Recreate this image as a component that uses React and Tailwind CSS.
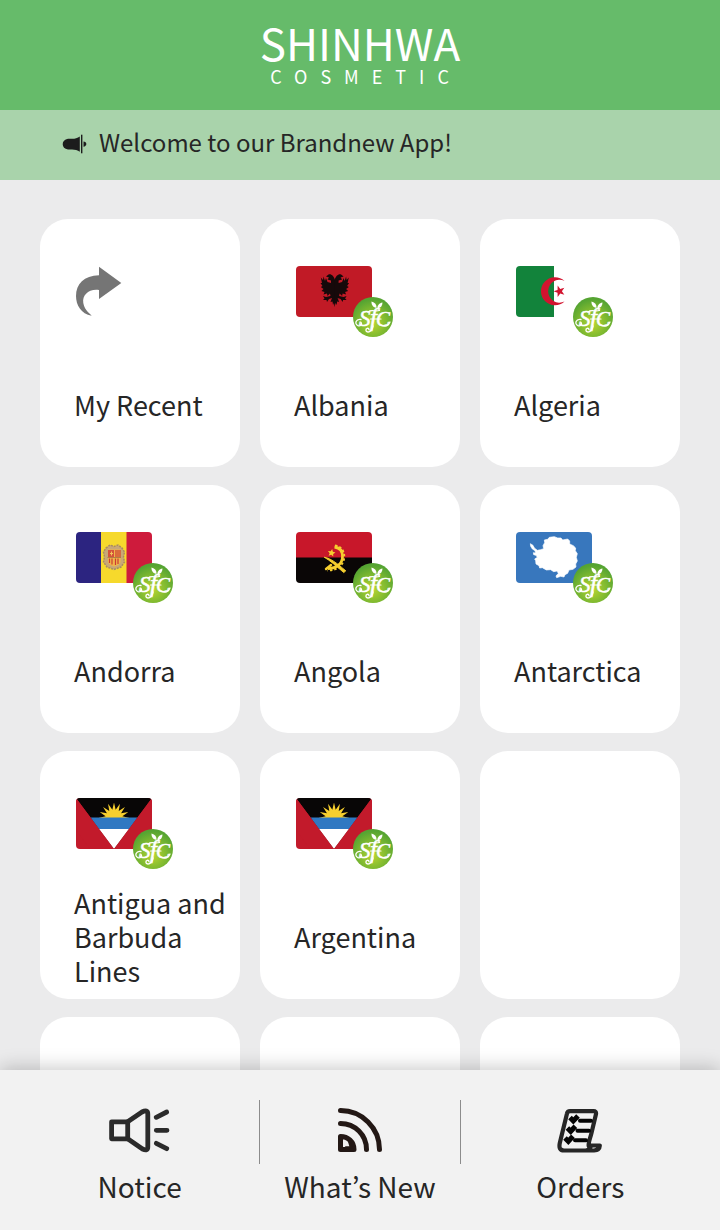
import React from "react";

function starPoints(cx, cy, outer, inner, spikes, turn = -90) {
  const points = [];
  for (let i = 0; i < spikes * 2; i++) {
    const r = i % 2 === 0 ? outer : inner;
    const a = ((turn + (i * 180) / spikes) * Math.PI) / 180;
    points.push(`${(cx + r * Math.cos(a)).toFixed(2)},${(cy + r * Math.sin(a)).toFixed(2)}`);
  }
  return points.join(" ");
}

function Flag({ children }) {
  return (
    <svg viewBox="0 0 76 51" className="h-[51px] w-[76px] rounded-[4px]" aria-hidden="true">
      {children}
    </svg>
  );
}

const EAGLE_HALF =
  "M39 14C38 10 35 7.5 32.5 8.5L30 10.5L33 11.5L31.5 13.5L35 14.5V17L31.5 16L30 12L29 15L27.5 10.5L27 14L24.8 11.5L26 17L24.5 17L26.5 20L24.8 21L27.5 23L25.5 25L28.5 26L27.5 28.5L31 27.5L31.5 30L34 27.5L34.5 30L30 31L27 30L28.5 32.5L27 34L30.5 34L31 36L33 33L36 32L34.5 36L36.5 35.5L37 39L38 37L39 41Z";

function AlbaniaFlag() {
  return (
    <Flag>
      <rect width="76" height="51" fill="#c11a26" />
      <g fill="#16090a">
        <path d={EAGLE_HALF} />
        <path d={EAGLE_HALF} transform="matrix(-1 0 0 1 77.6 0)" />
      </g>
    </Flag>
  );
}

function AlgeriaFlag() {
  return (
    <Flag>
      <rect width="76" height="51" fill="#fff" />
      <rect width="38" height="51" fill="#12833b" />
      <path d="M48.5 15A14 14 0 1 0 48.5 35.5A11.4 11.4 0 1 1 48.5 15Z" fill="#d2142f" />
      <polygon points={starPoints(43.5, 25.3, 6, 2.4, 5, 180)} fill="#d2142f" />
    </Flag>
  );
}

function AndorraFlag() {
  return (
    <Flag>
      <rect width="26" height="51" fill="#2c2480" />
      <rect x="25" width="26" height="51" fill="#f6d92c" />
      <rect x="50.5" width="25.5" height="51" fill="#ce1b3c" />
      <path
        d="M30 16L34 13L38 14.5L42 13L46 16L48.5 20L47.5 25L48.5 30L45 35L38 37.5L31 35L27.5 30L28.5 25L27.5 20Z"
        fill="#c9a875"
        stroke="#a98b62"
        strokeWidth="1.5"
        strokeDasharray="2 1"
      />
      <path d="M32 17.5H44.5V30Q43 33.5 38.2 34.5Q33.5 33.5 32 30Z" fill="#f0b54a" />
      <rect x="32" y="18" width="6" height="7" fill="#d4523b" />
      <path d="M40 18V25M42 18V25M44 18V25M39.5 26.5V33M42 26.5V32M33.5 26.5V31M36 26.5V32.5" stroke="#cc3b33" strokeWidth="1.2" />
      <path d="M34 21.5H37M35.5 19.5V23.5" stroke="#f3c65a" strokeWidth="1" />
      <path d="M31.5 25.5H45" stroke="#8a5a3a" strokeWidth="0.6" />
    </Flag>
  );
}

function AngolaFlag() {
  return (
    <Flag>
      <rect width="76" height="26" fill="#c8172a" />
      <rect y="25.5" width="76" height="25.5" fill="#0a0606" />
      <path d="M38.5 15C44.5 15.8 46.8 20 46.5 25C46.2 31.5 41 36.5 32 36.5" fill="none" stroke="#f6cf2f" strokeWidth="2.8" />
      <path d="M39 13.5C45.5 14.5 48.5 19.5 48.2 25.2C47.9 32.8 41.5 38.4 31.5 38.4" fill="none" stroke="#f6cf2f" strokeWidth="2" strokeDasharray="2.4 2" />
      <path d="M28.2 25.2C35 26.5 40 30.5 49.8 38.8L47.8 40.6C39.5 33.5 34 28.5 28.2 25.2Z" fill="#f6cf2f" stroke="#f6cf2f" strokeWidth="0.9" />
      <path d="M35 33L30 37" stroke="#f6cf2f" strokeWidth="2.4" strokeLinecap="round" />
      <polygon points={starPoints(35.5, 21, 4, 1.9, 5, -80)} fill="#f6cf2f" />
    </Flag>
  );
}

function AntarcticaFlag() {
  return (
    <Flag>
      <rect width="76" height="51" fill="#3877bd" />
      <path
        transform="scale(0.3333) translate(-33 -36)"
        fill="#fff"
        stroke="#fff"
        strokeWidth="2"
        strokeLinejoin="round"
        d="M76 71L84 76L88 84L97 91L107 89L116 86L114 77L119 68L118 60L128 58L133 52L148 50L158 54L168 54L173 60L188 57L194 63L194 72L205 77L212 84L211 92L217 101L214 112L217 123L212 132L213 141L204 148L192 150L188 160L180 164L177 171L167 169L155 173L153 168L160 160L156 153L146 155L137 149L124 150L112 143L104 144L102 137L93 132L92 122L89 117L97 112L93 106L86 104L85 98L92 99L90 92L82 87L77 79Z"
      />
    </Flag>
  );
}

function AntiguaFlag() {
  return (
    <Flag>
      <rect width="76" height="51" fill="#c21a2b" />
      <polygon points="0,0 76,0 38,51" fill="#080606" />
      <polygon points={starPoints(38, 20, 15.5, 8.5, 16)} fill="#f7cf2e" />
      <polygon points="14.5,19.5 61.5,19.5 53,31 23,31" fill="#2f78c2" />
      <polygon points="23,31 53,31 38,51" fill="#fff" />
      <path d="M0 0L38 51L14 51L0 32ZM76 0L38 51L62 51L76 32Z" fill="#c21a2b" />
    </Flag>
  );
}

function PartnerBadge() {
  return (
    <svg viewBox="0 0 40 40" className="absolute top-[31px] left-[57px] size-10" aria-hidden="true">
      <defs>
        <radialGradient id="badge-green" cx="0.5" cy="0.65" r="0.6">
          <stop offset="0" stopColor="#b9d532" />
          <stop offset="0.5" stopColor="#86bd30" />
          <stop offset="1" stopColor="#55a432" />
        </radialGradient>
      </defs>
      <circle cx="20" cy="20" r="20" fill="url(#badge-green)" />
      <g fill="#fff">
        <path d="M23.5 11C19 10 18.5 7 18.5 4.5C22 5.5 23.8 7.5 23.5 11Z" />
        <path d="M24.5 11.5C24 8.5 26.5 6 29.5 5.5C29.5 9 27.5 11 24.5 11.5Z" />
        <g fontFamily="'Liberation Serif', serif" fontStyle="italic" stroke="#fff" strokeWidth="0.5">
          <text x="6" y="29" fontSize="23">S</text>
          <text x="17" y="29" fontSize="25">f</text>
          <text x="23" y="29" fontSize="21">C</text>
        </g>
      </g>
      <g fill="none" stroke="#fff" strokeLinecap="round">
        <path d="M8 22.5C3 21.5 1 27 5 28.7C7.5 29.5 9.5 27.5 8 25.5" strokeWidth="1.3" />
        <path d="M15 15C18.5 12 22 15 26.5 13.5M17.5 22H28" strokeWidth="1.2" />
        <path d="M20 29C19 35 14 36.5 13 33.5C12.5 31 15.5 30.5 16 32.5" strokeWidth="1.4" />
        <path d="M37 25C35.5 29 32 30 28.5 28.5" strokeWidth="1.3" />
      </g>
    </svg>
  );
}

function RecentIcon() {
  return (
    <svg viewBox="1 0 48 51" className="h-[51px] w-12" aria-hidden="true">
      <path
        d="M24 0.7L46.3 17L24 33V24C14 22.5 7 29 8.3 37C9.3 43 13 46 16.7 49.7C6 48 1 39 1 30C1 18 9 9.5 24 9.3Z"
        fill="#757575"
      />
    </svg>
  );
}

function HornIcon() {
  return (
    <svg viewBox="0 0 25 20" className="h-5 w-[25px]" fill="#1c1c1c" aria-hidden="true">
      <path d="M6 4.8H10C13 4.8 15.5 4 17.8 2.5V17.7C15.5 16.2 13 15.5 10 15.5H6C2.5 15 0.7 12.7 0.7 10.2S2.5 5.2 6 4.8Z" />
      <rect x="19" y="0.7" width="1.4" height="18.6" />
      <path d="M21.5 7.5C23.2 7.5 24.3 8.7 24.3 10.1S23.2 12.7 21.5 12.7Z" />
    </svg>
  );
}

function NoticeIcon() {
  return (
    <svg viewBox="0 0 62 46" className="h-[46px] w-[62px]" fill="none" stroke="#2b2b2b" strokeWidth="4.8" strokeLinecap="round" strokeLinejoin="round" aria-hidden="true">
      <path d="M18.7 13.8H2.6V30.8H18.7Z" />
      <path d="M18.7 13.8L33 4Q38.8 1 38.8 6V39Q38.8 43.5 33.5 41L18.7 30.8" />
      <path d="M47.3 9.3L57.7 4M47.3 22.3H58M47.3 35.3L57.7 40.7" />
    </svg>
  );
}

function NewsIcon() {
  return (
    <svg viewBox="0 0 44 46" className="h-[46px] w-11" fill="none" stroke="#231815" strokeWidth="5" strokeLinecap="round" strokeLinejoin="round" aria-hidden="true">
      <path d="M2.5 2.5C24 2.5 41.5 20 41.5 41.5M2.5 15.5C17 15.5 28.5 27 28.5 41.5" />
      <path d="M2.5 28.5C10 28.5 16 34 16 41.5H2.5Z" />
      <path d="M11 33L13 39.5H8" strokeWidth="2.5" />
    </svg>
  );
}

function OrdersIcon() {
  return (
    <svg viewBox="0 0 46 46" className="size-[46px]" fill="none" stroke="#262626" strokeWidth="4.2" strokeLinecap="round" strokeLinejoin="round" aria-hidden="true">
      <path d="M31.7 38C31 35 33 31 34.5 25L39 6Q39.5 3.2 36.5 3.2H13Q10.5 3.2 10 5.5L2.8 35Q1.2 42.5 7 42.5H37Q42.5 42 42.8 37.5H34Q33 42 30 42" />
      <g stroke="#050505" strokeWidth="4">
        <path d="M13 9.6L16.3 13L21 8M10.4 20L13.7 23.3L18.4 18.2M8 30L11.3 33.3L16 28.2" strokeLinecap="butt" strokeLinejoin="miter" strokeWidth="5" />
        <path d="M23 12.7H34M20.5 22.7H32M18 32.3H29" />
      </g>
    </svg>
  );
}

const CARDS = [
  { name: "My Recent", icon: RecentIcon },
  { name: "Albania", icon: AlbaniaFlag, badge: true },
  { name: "Algeria", icon: AlgeriaFlag, badge: true },
  { name: "Andorra", icon: AndorraFlag, badge: true },
  { name: "Angola", icon: AngolaFlag, badge: true },
  { name: "Antarctica", icon: AntarcticaFlag, badge: true },
  { name: "Antigua and Barbuda Lines", icon: AntiguaFlag, badge: true },
  { name: "Argentina", icon: AntiguaFlag, badge: true },
];

function Card({ name, icon: Icon, badge }) {
  return (
    <a href="#" className="flex min-h-[248px] flex-col rounded-[28px] bg-white pt-[47px]">
      <span className="relative ml-9 block h-[51px] w-[76px]">
        <Icon />
        {badge && <PartnerBadge />}
      </span>
      <span className="mt-9 ml-[34px] flex h-[104px] items-center text-[27px] leading-[34px]">{name}</span>
    </a>
  );
}

function NavItem({ icon: Icon, label }) {
  return (
    <a href="#" className="flex flex-col items-center gap-3">
      <Icon />
      <span className="text-[28px] leading-10 whitespace-nowrap">{label}</span>
    </a>
  );
}

export default function App() {
  return (
    <div className="flex h-screen flex-col bg-[#ebebec] font-['Noto_Sans_CJK_KR','Noto_Sans',sans-serif] text-[#262626]">
      <header className="flex h-[110px] shrink-0 flex-col items-center bg-[#66bb6a] pt-5 text-white">
        <h1 className="text-[44px] leading-[44px]">SHINHWA</h1>
        <p className="pl-3 text-[18px] leading-6 tracking-[13px]">COSMETIC</p>
      </header>
      <div className="flex h-[70px] shrink-0 items-center gap-3 bg-[#a9d3ab] pb-0.5 pl-[62px]">
        <HornIcon />
        <p className="-mt-1 text-[24px] leading-9">Welcome to our Brandnew App!</p>
      </div>
      <main className="min-h-0 flex-1 overflow-y-auto px-10 pt-[39px] [scrollbar-width:none]">
        <div className="grid grid-cols-3 gap-x-5 gap-y-[18px]">
          {CARDS.map((card) => (
            <Card key={card.name} {...card} />
          ))}
          {[0, 1, 2, 3].map((slot) => (
            <div key={slot} className="min-h-[248px] rounded-[28px] bg-white" />
          ))}
        </div>
      </main>
      <nav className="relative grid h-40 shrink-0 grid-cols-[6fr_1px_5fr_1px_6fr] bg-[#f2f2f2] px-5 pt-[38px] shadow-[0_-2px_18px_rgba(0,0,0,0.22)]">
        <NavItem icon={NoticeIcon} label="Notice" />
        <span className="-mt-2 h-16 bg-[#8c8c8c]" />
        <NavItem icon={NewsIcon} label="What’s New" />
        <span className="-mt-2 h-16 bg-[#8c8c8c]" />
        <NavItem icon={OrdersIcon} label="Orders" />
      </nav>
    </div>
  );
}
